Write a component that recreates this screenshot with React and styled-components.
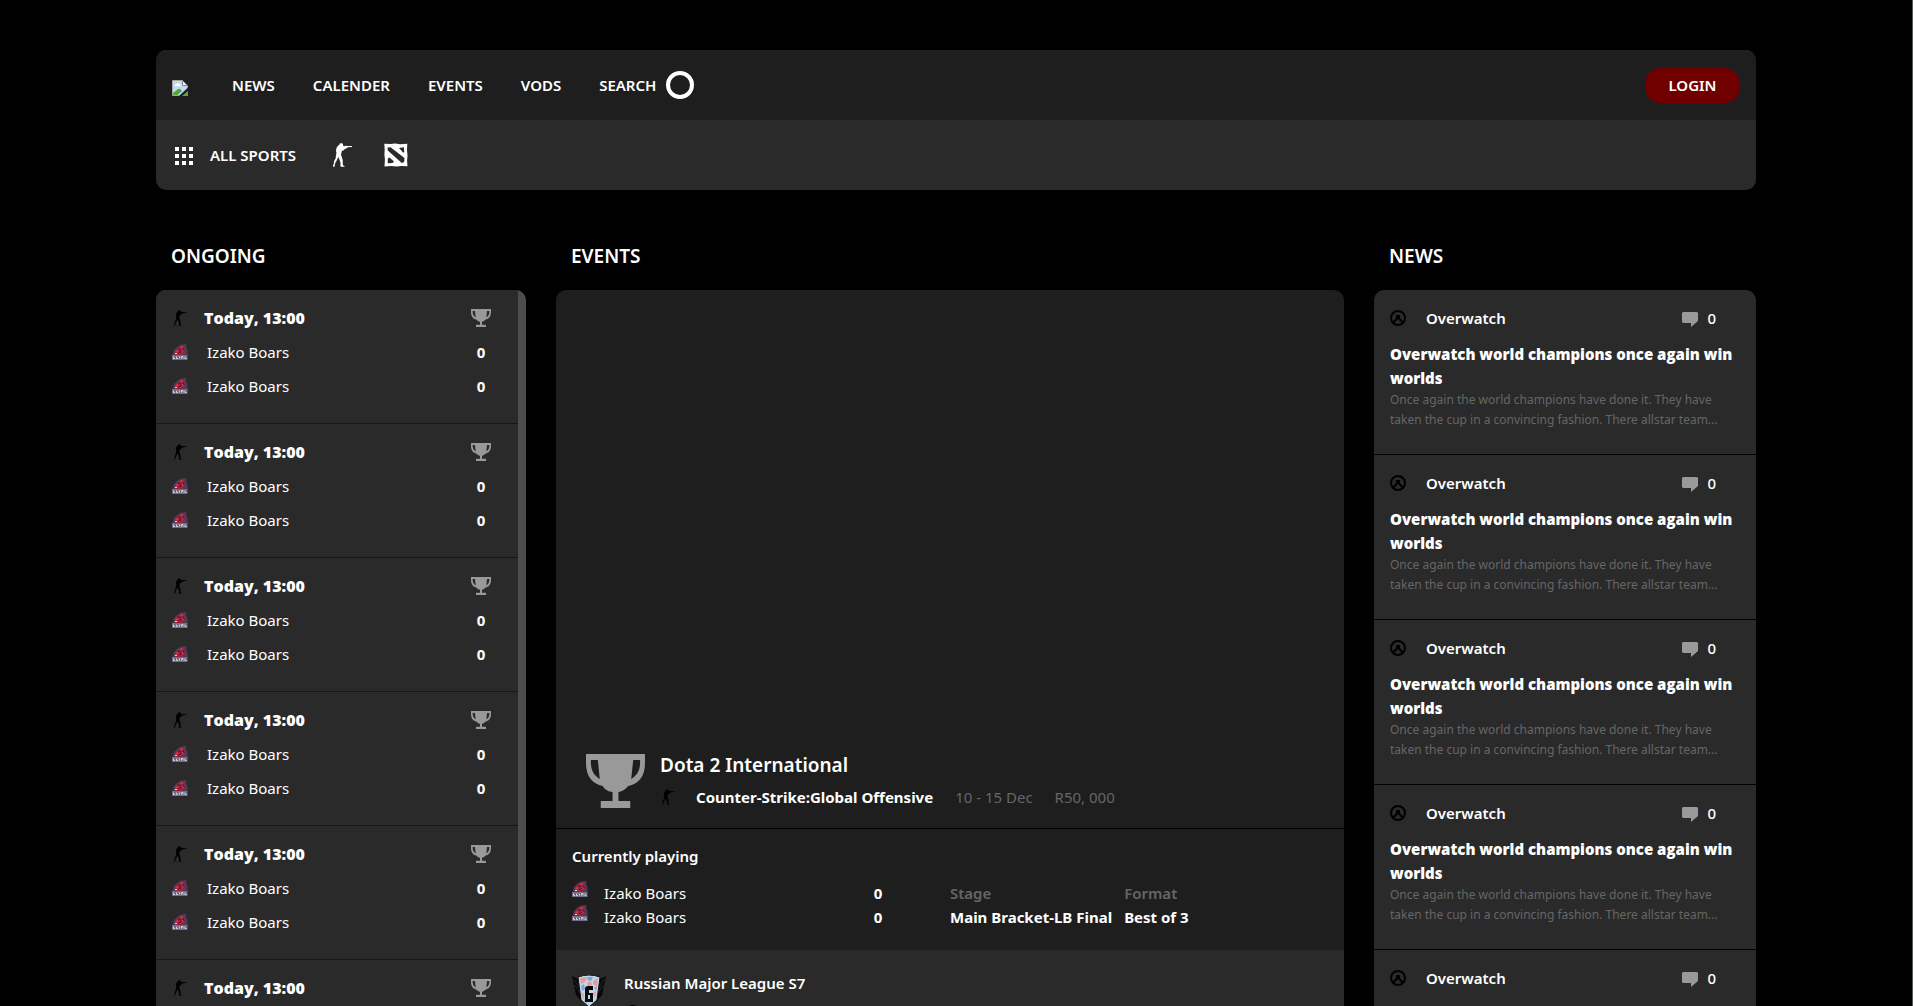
import React from "react";
import styled, { createGlobalStyle } from "styled-components";

const GlobalStyle = createGlobalStyle`
  *, *::before, *::after { box-sizing: border-box; }
  html, body, #root { height: 100%; }
  body {
    margin: 0;
    background: #000;
    color: #fff;
    font-family: "Noto Sans", "Open Sans", sans-serif;
    font-size: 15px;
    line-height: 24px;
    overflow: hidden;
  }
  h1, h2, h3, p, ul { margin: 0; padding: 0; font-size: inherit; }
  ul { list-style: none; }
  a { color: inherit; text-decoration: none; }
`;

const Page = styled.div`
  height: 100%;
  overflow: hidden;
  padding: 50px 24px 0;
  border-right: 1px solid #565a58;
`;

const Shell = styled.div`
  max-width: 1600px;
  height: 100%;
  margin: 0 auto;
  display: flex;
  flex-direction: column;
`;

const Header = styled.header`
  flex: none;
  border-radius: 10px;
  overflow: hidden;
  background: #2a2a2a;
`;

const TopBar = styled.div`
  display: flex;
  align-items: center;
  height: 70px;
  padding: 0 16px;
  background: #1e1e1e;
`;

const HomeLink = styled.a`
  display: flex;
  padding-top: 6px;
`;

const Nav = styled.nav`
  display: flex;
  align-items: center;
  gap: 38px;
  margin-left: 44px;
  font-weight: 600;
`;

const SearchButton = styled.button`
  display: flex;
  align-items: center;
  gap: 10px;
  padding: 0;
  border: 0;
  background: none;
  color: inherit;
  font: inherit;
`;

const Ring = styled.span`
  width: 28px;
  height: 28px;
  border: 4px solid #fff;
  border-radius: 50%;
`;

const LoginButton = styled.button`
  width: 95px;
  height: 35px;
  margin-left: auto;
  border: 0;
  border-radius: 16px;
  background: #700000;
  color: #fff;
  font: inherit;
  font-weight: 600;
`;

const SportsBar = styled.div`
  display: flex;
  align-items: center;
  height: 70px;
  padding: 0 16px;
`;

const AllSports = styled.button`
  display: flex;
  align-items: center;
  gap: 16px;
  margin-right: 34px;
  padding: 0;
  border: 0;
  background: none;
  color: #fff;
  font: inherit;
  font-weight: 600;
`;

const SportLink = styled.a`
  display: flex;
  margin-right: 30px;
`;

const Columns = styled.main`
  flex: 1;
  min-height: 0;
  display: grid;
  grid-template-columns: 370px minmax(0, 1fr) 382px;
  gap: 30px;
  padding-top: 50px;
`;

const Column = styled.section`
  min-height: 0;
  display: flex;
  flex-direction: column;
`;

const ColumnTitle = styled.h2`
  flex: none;
  height: 50px;
  padding: 4px 15px 0;
  font-size: 19px;
  font-weight: 600;
`;

const Panel = styled.div`
  flex: 1;
  min-height: 0;
  overflow: hidden;
  border-radius: 10px 10px 0 0;
  background: ${(p) => p.$bg || "#2a2a2a"};
`;

const ScrollPanel = styled(Panel)`
  && { padding-right: 8px; }
`;

const Match = styled.li`
  height: 134px;
  padding: 16px 27px 0 16px;
  border-bottom: 1px solid #171717;
  background: #2a2a2a;
`;

const MatchRow = styled.div`
  display: flex;
  align-items: center;
  height: 24px;
  margin-bottom: 10px;
`;

const IconCell = styled.span`
  display: flex;
  flex: none;
  width: ${(p) => p.$w}px;
`;

const Time = styled.h3`
  flex: 1;
  font-family: "Open Sans", "Noto Sans", sans-serif;
  font-size: 16px;
  font-weight: 800;
`;

const Team = styled.span`
  flex: 1;
`;

const Score = styled.span`
  width: 20px;
  text-align: center;
  font-weight: 700;
`;

const Hero = styled.article`
  display: flex;
  flex-direction: column;
  justify-content: flex-end;
  height: 539px;
  padding: 0 30px 19px;
  border-bottom: 1px solid #000;
`;

const HeroBody = styled.div`
  display: flex;
  align-items: center;
`;

const HeroTitle = styled.h3`
  margin-bottom: 8px;
  font-size: 19px;
  font-weight: 600;
`;

const Meta = styled.div`
  display: flex;
  align-items: center;
  gap: 22px;
  color: #666;
`;

const Game = styled.span`
  display: flex;
  align-items: center;
  color: #fff;
  font-weight: 700;
`;

const Playing = styled.section`
  height: 121px;
  padding: 15px 16px 0;
`;

const PlayingTitle = styled.h3`
  margin-bottom: 13px;
  font-weight: 600;
`;

const PlayingGrid = styled.div`
  display: flex;
`;

const Teams = styled.ul`
  width: 316px;
  margin-right: 62px;
`;

const TeamRow = styled.li`
  display: flex;
`;

const Detail = styled.div`
  display: flex;
  flex-direction: column;
  margin-right: 12px;
  font-weight: 700;
`;

const DetailLabel = styled.span`
  color: #666;
  font-weight: 600;
`;

const EventRow = styled.article`
  display: flex;
  gap: 18px;
  padding: 21px 16px;
  background: #2a2a2a;
`;

const EventLogo = styled.span`
  display: flex;
  padding-top: 4px;
`;

const EventTitle = styled.h3`
  margin-bottom: 4px;
  font-weight: 600;
`;

const NewsItem = styled.li`
  height: 165px;
  padding: 16px 16px 0;
  border-bottom: 1px solid #000;
`;

const NewsHead = styled.div`
  display: flex;
  align-items: center;
  margin-bottom: 12px;
  font-weight: 600;
`;

const Comments = styled.span`
  display: flex;
  align-items: center;
  gap: 8px;
  margin-left: auto;
  padding-right: 24px;
  font-weight: 500;
`;

const NewsTitle = styled.h3`
  font-family: "Open Sans", "Noto Sans", sans-serif;
  font-weight: 800;
`;

const NewsText = styled.p`
  color: #666;
  font-size: 12px;
  line-height: 20px;
`;

function BrokenImage() {
  return (
    <svg width="16" height="16" viewBox="0 0 16 16" role="img" aria-label="Home">
      <path d="M.5.5h10l5 5V9L8 15.500H.5z" fill="#c3d7f7" stroke="#a5a5a5" />
      <path d="M10.500.5l5 5h-5z" fill="#f2f2f2" stroke="#8b8b8b" />
      <path d="M2.500 6q0-2 2-2q1-2 2.500 0q2 0 2 2z" fill="#fff" />
      <path d="M1 15v-2l5-4q2-1 4 2l-4.500 4z" fill="#4eaa35" />
      <path d="M10 16l6-5v5z" fill="#58a946" />
      <path d="M16 7.500v2L9 16H7z" fill="#1e1e1e" />
    </svg>
  );
}

function Grid() {
  return (
    <svg width="22" height="20" viewBox="0 0 22 20" fill="#fff" aria-hidden="true">
      {[2, 9, 16].map((y) => [3, 10, 17].map((x) => <rect key={`${x}-${y}`} x={x} y={y} width="4" height="4" />))}
    </svg>
  );
}

function Soldier({ size = 16, color = "#000" }) {
  return (
    <svg width={size} height={size} viewBox="0 0 24 24" fill={color} aria-hidden="true">
      <path d="M9.500.8L11.500 0l1.500 1 .2 2 1.300.3 1-.5 2 .2 4.500.1v.9l-4.500.2-.5 1-2 .6-1.500 1.600-1.700.3-.3 2.300-.6 1.500 1 2.500.8 3 .1 3.500.2 1.800 1.500.8v.7h-3.700l-.5-1.300.3-2-.8-3.200-1.600-3.300-1.200 3-1.500 2.500-.8 2.700-.1 1.600H3l.1-1.500.7-1.500.4-3 1.400-2.400.4-3.400.5-2-.5-1.600.3-3 1-2 1.700-1.400.6-.4z" />
    </svg>
  );
}

function Dota() {
  return (
    <svg width="24" height="24" viewBox="0 0 24 24" aria-hidden="true">
      <path d="M.3.800l6 .3 5-.5 5 .6 7-.4-.3 6 .5 6-.4 5 .4 5.500-6-.3-5 .6-5.500-.5-6.500.3.4-7-.5-5 .3-5z" fill="#fff" />
      <path d="M3.500 4.500l3-.3L20.500 15l-.4 4-2.300 1L3.800 7.500z" fill="#2a2a2a" />
      <path d="M15 5l5-.8.2 5.300-1.700-.2-.7-1.300zM3.800 15.500l1.700-1 4.500 4-1.500 1.600-4.700.2z" fill="#2a2a2a" />
    </svg>
  );
}

function Trophy({ width, height }) {
  return (
    <svg width={width} height={height} viewBox="0 0 60 54" preserveAspectRatio="none" role="img" aria-label="Trophy">
      <path
        fillRule="evenodd"
        fill="#999"
        d="M0 0h60v9c0 14-7 21-17 23-3 4-7 5.500-10 6v9h12v7H15v-7h12v-9c-4-.5-8-2-10-6C7 30 0 23 0 9zM5 6v3c0 8 4 13 9 16L12 6zM48 6l-2 19c5-3 9-8 9-16V6z"
      />
    </svg>
  );
}

function Boars({ size = 16 }) {
  return (
    <svg width={size} height={size} viewBox="0 0 16 16" aria-hidden="true">
      <path d="M.5 11L2 6l3-3 4-2.500L14.500 0 14 3l1.500 3v6H1z" fill="#453f5c" />
      <path d="M2 9.500l1.500-3.500L6 3.500l3-2 4-.5-1 2 1 1.500-1 2 1.500 1.500-2.500 2.500-3 .5-4 .5z" fill="#a3203a" />
      <path d="M3 8l2-2 1.500 1-1 1.500zM8 3l2-1 1 1-2 1.500zM9 7l2-1 .5 1.500L9 9z" fill="#d23a52" />
      <path d="M6 4.500l3 1.500M7 8.500l3-1M11 4.500l1 2" stroke="#29233c" />
      <path d="M3 9.500h2" stroke="#ddd" />
      <path d="M0 11h15.500v5H0z" fill="#6f6d84" />
      <path d="M1.500 12.500v2h1.500M4.500 12.500v2h1.500M7.500 12.500v2M9.500 14.500v-2h1.500v2M13 12.500v2h1.500" fill="none" stroke="#d4d4e0" />
    </svg>
  );
}

function SiegeShield() {
  return (
    <svg width="34" height="34" viewBox="0 0 34 34" aria-hidden="true">
      <path d="M0 1l8 4 1 21-5-6zM34 1l-8 4-1 21 5-6z" fill="#080808" />
      <path d="M1.500 4l6 9M3 10l5 8M32.500 4l-6 9M31 10l-5 8" stroke="#2a2a2a" />
      <path d="M6 2q11-4 22 0l-3 23-8 7-8-7z" fill="#c2d6ea" stroke="#111" />
      <path d="M8 3l7-1-2 5-4 2zM21 6l5-3-1 9-4-3zM9 17l3 2-1 6zM21 18l3-2-1 7zM15 8l4-2 1 4-4 2z" fill="#e79a9b" />
      <path d="M16 2l5 0-2 4-4-1zM9 11l3-2 1 5-3 2zM22 12l3 0-1 4zM11 24l3 2 1 3z" fill="#77a8d8" />
      <path d="M13 14q0-3 3-3h5v4h-4v3h4v9h-8zM16 20v4h2v-4z" fill="#080808" fillRule="evenodd" />
    </svg>
  );
}

function Operator() {
  return (
    <svg width="16" height="16" viewBox="0 0 16 16" aria-hidden="true">
      <path d="M3 8q0-6 5.500-6T14 8v4l-3 3H6l-3-3z" fill="#000" />
      <path d="M5 8h7v2H5z" fill="#2a2a2a" />
    </svg>
  );
}

function Overwatch() {
  return (
    <svg width="16" height="16" viewBox="0 0 16 16" fill="none" stroke="#000" strokeWidth="2" aria-hidden="true">
      <circle cx="8" cy="8" r="7" />
      <path d="M3 13l4-4.500V5M13 13L9 8.500V5" />
    </svg>
  );
}

function Bubble() {
  return (
    <svg width="17" height="18" viewBox="0 0 17 18" fill="#999" role="img" aria-label="Comments">
      <path d="M1 3h14l1 1v8l-7 6v-4H1l-1-1V4z" />
    </svg>
  );
}

const keys = (n) => Array.from({ length: n }, (_, i) => i);

export default function App() {
  return (
    <Page>
      <GlobalStyle />
      <Shell>
        <Header>
          <TopBar>
            <HomeLink href="#home"><BrokenImage /></HomeLink>
            <Nav>
              <a href="#news">NEWS</a>
              <a href="#calender">CALENDER</a>
              <a href="#events">EVENTS</a>
              <a href="#vods">VODS</a>
              <SearchButton type="button">SEARCH<Ring /></SearchButton>
            </Nav>
            <LoginButton type="button">LOGIN</LoginButton>
          </TopBar>
          <SportsBar>
            <AllSports type="button"><Grid />ALL SPORTS</AllSports>
            <SportLink href="#csgo" aria-label="Counter-Strike"><Soldier size={24} color="#fff" /></SportLink>
            <SportLink href="#dota" aria-label="Dota 2"><Dota /></SportLink>
          </SportsBar>
        </Header>
        <Columns>
          <Column>
            <ColumnTitle>ONGOING</ColumnTitle>
            <ScrollPanel as="ul" $bg="#4d4d4d">
              {keys(6).map((k) => (
                <Match key={k}>
                  <MatchRow>
                    <IconCell $w={32}><Soldier /></IconCell>
                    <Time>Today, 13:00</Time>
                    <Trophy width={20} height={18} />
                  </MatchRow>
                  {keys(2).map((t) => (
                    <MatchRow key={t}>
                      <IconCell $w={35}><Boars /></IconCell>
                      <Team>Izako Boars</Team>
                      <Score>0</Score>
                    </MatchRow>
                  ))}
                </Match>
              ))}
            </ScrollPanel>
          </Column>
          <Column>
            <ColumnTitle>EVENTS</ColumnTitle>
            <Panel $bg="#1e1e1e">
              <Hero>
                <HeroBody>
                  <IconCell $w={74}><Trophy width={59} height={54} /></IconCell>
                  <div>
                    <HeroTitle>Dota 2 International</HeroTitle>
                    <Meta>
                      <Game><IconCell $w={36}><Soldier /></IconCell>Counter-Strike:Global Offensive</Game>
                      <span>10 - 15 Dec</span>
                      <span>R50, 000</span>
                    </Meta>
                  </div>
                </HeroBody>
              </Hero>
              <Playing>
                <PlayingTitle>Currently playing</PlayingTitle>
                <PlayingGrid>
                  <Teams>
                    {keys(2).map((t) => (
                      <TeamRow key={t}>
                        <IconCell $w={32}><Boars /></IconCell>
                        <Team>Izako Boars</Team>
                        <Score>0</Score>
                      </TeamRow>
                    ))}
                  </Teams>
                  <Detail><DetailLabel>Stage</DetailLabel>Main Bracket-LB Final</Detail>
                  <Detail><DetailLabel>Format</DetailLabel>Best of 3</Detail>
                </PlayingGrid>
              </Playing>
              <EventRow>
                <EventLogo><SiegeShield /></EventLogo>
                <div>
                  <EventTitle>Russian Major League S7</EventTitle>
                  <Meta><Game><IconCell $w={36}><Operator /></IconCell>Rainbow six siege</Game></Meta>
                </div>
              </EventRow>
            </Panel>
          </Column>
          <Column>
            <ColumnTitle>NEWS</ColumnTitle>
            <Panel as="ul">
              {keys(5).map((k) => (
                <NewsItem key={k}>
                  <NewsHead>
                    <IconCell $w={36}><Overwatch /></IconCell>
                    Overwatch
                    <Comments><Bubble />0</Comments>
                  </NewsHead>
                  <NewsTitle>Overwatch world champions once again win worlds</NewsTitle>
                  <NewsText>Once again the world champions have done it. They have taken the cup in a convincing fashion. There allstar team...</NewsText>
                </NewsItem>
              ))}
            </Panel>
          </Column>
        </Columns>
      </Shell>
    </Page>
  );
}
